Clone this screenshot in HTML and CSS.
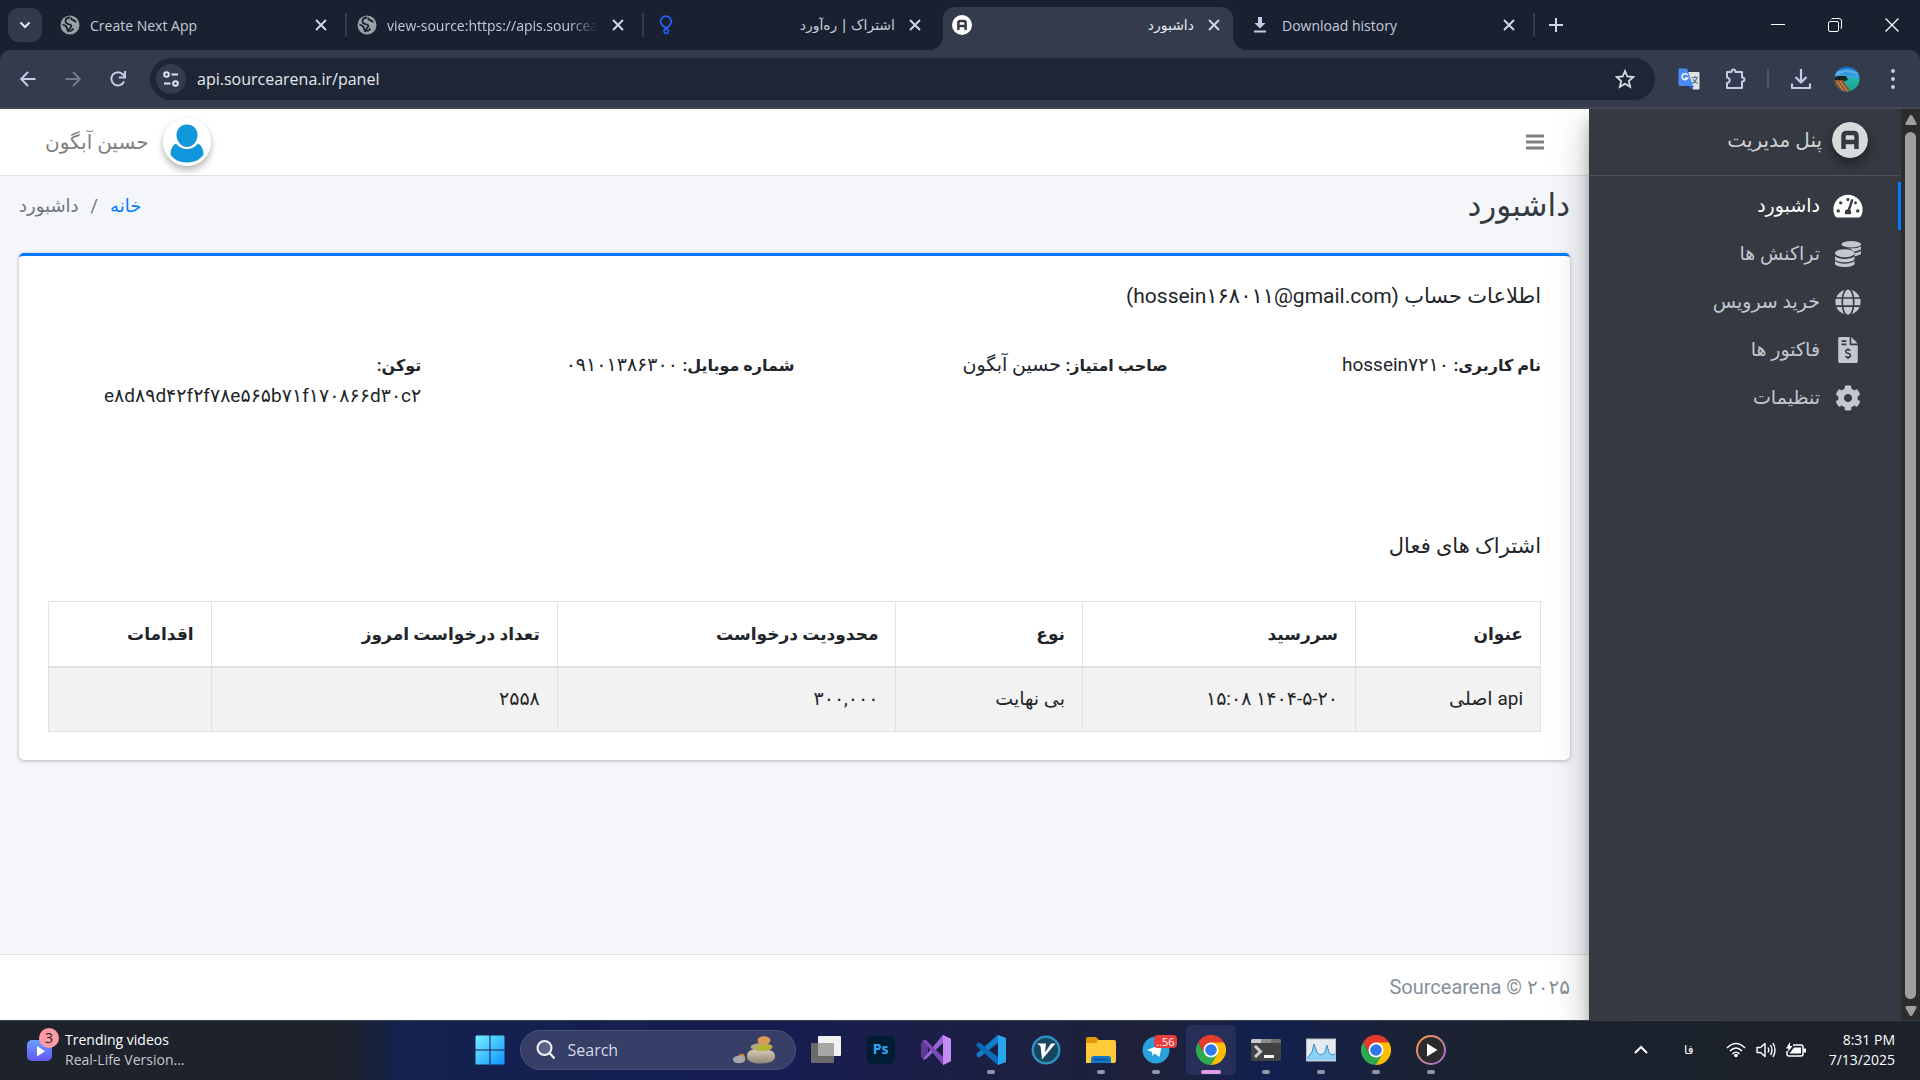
FILE: index.html
```html
<!DOCTYPE html>
<html lang="en">
<head>
<meta charset="utf-8">
<title>داشبورد</title>
<link rel="stylesheet" href="styles.css">
</head>
<body>
<svg class="defs" aria-hidden="true">
  <symbol id="x" viewBox="0 0 12 12"><path d="M1 1l10 10M11 1L1 11" stroke="currentColor" stroke-width="2" fill="none"/></symbol>
  <symbol id="world" viewBox="0 0 20 20"><circle cx="10" cy="10" r="9.500" fill="#9aa0a6"/><path d="M10 2.500c-3 0-4.500 2-4.500 4 0 2.500 2.500 2.500 4.500 3 1.500.5 1.500 1.500 1 2.500-1 1.500-2.500 2-1.500 3.500.8 1 3-.5 4-2M2.500 9.500c2 .5 4 1.500 4.500 3.500.3 1.500.5 2.500 1.500 4M11.500 2.500c-.5 1.500 0 2.500 1.500 2.500 1.500.2 1.500 2 3.500 1.500" stroke="#19202f" stroke-width="1.800" fill="none"/></symbol>
  <symbol id="alogo" viewBox="0 0 36 36"><circle cx="18" cy="18" r="18" fill="currentColor"/><path d="M11.500 27V14q0-3 3-3h7q3 0 3 3v13M11.500 20h13" stroke="#343a40" stroke-width="4.500" fill="none"/></symbol>
  <symbol id="chrome" viewBox="0 0 30 30"><path d="M15 15L2 7.500A15 15 0 0 1 28 7.500z" fill="#e33b2e"/><path d="M15 15l0 15A15 15 0 0 0 28 7.500H15z" fill="#fdbd00"/><path d="M2 7.500l6.500 11.200L15 7.500z" fill="#e33b2e"/><path d="M2 7.500L8.500 18.700 15 22.500l6.500-3.800L15 30A15 15 0 0 1 2 7.500z" fill="#2da94f"/><circle cx="15" cy="15" r="7.500" fill="#fff"/><circle cx="15" cy="15" r="5.800" fill="#2f78ee"/></symbol>
</svg>

<header class="browser">
  <div class="tabstrip">
    <button class="tab-search" aria-label="Search tabs"><svg width="12" height="8" viewBox="0 0 12 8"><path d="M1.500 1.500L6 6l4.500-4.500" stroke="#e3e6ee" stroke-width="2.200" fill="none"/></svg></button>
    <div class="tab">
      <svg class="fav" width="20" height="20"><use href="#world"/></svg><span class="tab-title">Create Next App</span>
      <button class="tab-x" aria-label="Close tab"><svg width="12" height="12"><use href="#x"/></svg></button>
    </div>
    <div class="tab">
      <svg class="fav" width="20" height="20"><use href="#world"/></svg><span class="tab-title fade">view-source:https://apis.sourcearena.ir</span>
      <button class="tab-x" aria-label="Close tab"><svg width="12" height="12"><use href="#x"/></svg></button>
    </div>
    <div class="tab plain">
      <svg class="fav" width="24" height="20" viewBox="0 0 20 20"><path d="M10 13L6.500 10.500A5.300 5.300 0 1 1 13.500 10.500L9 14.500a2.200 2.200 0 1 0 3 .5L8.500 12" stroke="#2563ff" stroke-width="1.700" fill="none"/></svg><span class="tab-title" dir="rtl">اشتراک | ره‌آورد</span>
      <button class="tab-x" aria-label="Close tab"><svg width="12" height="12"><use href="#x"/></svg></button>
    </div>
    <div class="tab active">
      <svg class="fav" width="20" height="20"><use href="#alogo"/></svg><span class="tab-title" dir="rtl">داشبورد</span>
      <button class="tab-x" aria-label="Close tab"><svg width="12" height="12"><use href="#x"/></svg></button>
    </div>
    <div class="tab">
      <svg class="fav" width="24" height="20" viewBox="0 0 20 20"><path d="M8 2h4v6h3.500L10 13.500 4.500 8H8zM4 15.500h12v2H4z" fill="#c3cbe6"/></svg><span class="tab-title">Download history</span>
      <button class="tab-x" aria-label="Close tab"><svg width="12" height="12"><use href="#x"/></svg></button>
    </div>
    <button class="new-tab" aria-label="New tab"><svg width="14" height="14" viewBox="0 0 14 14"><path d="M7 0v14M0 7h14" stroke="#d0d6ea" stroke-width="2"/></svg></button>
    <div class="win">
      <button aria-label="Minimize"><svg width="14" height="14" viewBox="0 0 14 14"><path d="M0 6.500h14" stroke="#fff"/></svg></button>
      <button aria-label="Restore"><svg width="14" height="14" viewBox="0 0 14 14"><rect x=".5" y="3.500" width="10" height="10" rx="1.500" stroke="#fff" fill="none"/><path d="M3 1.500q.5-1 2-1h6q2.500 0 2.500 2.500v6q0 1.500-1 2" stroke="#fff" fill="none"/></svg></button>
      <button aria-label="Close"><svg width="14" height="14" viewBox="0 0 14 14"><path d="M.5.5l13 13M13.500.5l-13 13" stroke="#fff" stroke-width="1.300"/></svg></button>
    </div>
  </div>
  <div class="toolbar">
    <button class="nav-btn" aria-label="Back"><svg width="16" height="16" viewBox="0 0 16 16"><path d="M15.500 8H1.500M8 1L1.200 8 8 15" stroke="#c3cbe6" stroke-width="2" fill="none"/></svg></button>
    <button class="nav-btn" aria-label="Forward"><svg width="16" height="16" viewBox="0 0 16 16"><path d="M.5 8h14M8 1l6.800 7L8 15" stroke="#737a8c" stroke-width="2" fill="none"/></svg></button>
    <button class="nav-btn" aria-label="Reload"><svg width="16" height="16" viewBox="0 0 16 16"><path d="M14 10.500A6.600 6.600 0 1 1 13 3.500l1.500 2" stroke="#c3cbe6" stroke-width="2" fill="none"/><path d="M15 0v6.500H8.800" stroke="#c3cbe6" stroke-width="2" fill="none"/></svg></button>
    <div class="omnibox">
      <button class="site" aria-label="Site information"><svg width="16" height="16" viewBox="0 0 16 16"><g stroke="#e0e4f0" stroke-width="2" fill="none"><circle cx="3.500" cy="3.500" r="2.300"/><path d="M8.500 3.500H15M1 12.500h6.500"/><circle cx="12.500" cy="12.500" r="2.300"/></g></svg></button>
      <input class="url" type="text" value="api.sourcearena.ir/panel" aria-label="Address">
      <button class="star" aria-label="Bookmark"><svg width="20" height="20" viewBox="0 0 20 20"><path d="M10 2l2.300 5.500 6 .5-4.500 4 1.400 5.800L10 14.700l-5.200 3.100L6.200 12 1.700 8l6-.5z" stroke="#d5d9e6" stroke-width="1.800" fill="none"/></svg></button>
    </div>
    <div class="tools">
      <button aria-label="Translate"><svg width="22" height="22" viewBox="0 0 22 22"><path d="M9 4h11.500q1 0 1 1v15.500q0 1-1 1H15z" fill="#dfe1e4"/><path d="M1 .5h8l6 17.500H2q-1.500 0-1.500-1.500V1.500Q.5.500 1.500.5z" fill="#4a8af4"/><path d="M11 18h5l-3 3.500z" fill="#2a56c6"/><path d="M9.500 7A3 3 0 1 0 9.700 10H7" stroke="#fff" stroke-width="1.400" fill="none"/><path d="M13.500 9.500H20M17 8v1.500M19 9.500q-1 4-5 6M15 11q1.500 3 4.500 4.500" stroke="#5b7e96" stroke-width="1.200" fill="none"/></svg></button>
      <button aria-label="Extensions"><svg width="22" height="22" viewBox="0 0 22 22"><path d="M3 4h4.500q0-2.500 2-2.500t2 2.500H18v5.500q2.500 0 2.500 2t-2.500 2V20H3v-5q2.700-.5 2.700-2.800T3 9.500z" stroke="#c3cbe6" stroke-width="2" stroke-linejoin="round" fill="none"/></svg></button>
      <span class="bar"></span>
      <button aria-label="Downloads"><svg width="22" height="22" viewBox="0 0 22 22"><path d="M11 1v13M5.500 9l5.500 5.500L16.500 9M2 15.500V20h18v-4.500" stroke="#c3cbe6" stroke-width="2.200" stroke-linejoin="round" fill="none"/></svg></button>
      <button aria-label="Profile"><svg width="26" height="26" viewBox="0 0 26 26"><defs><clipPath id="av"><circle cx="13" cy="13" r="12.500"/></clipPath><linearGradient id="sky" x2="0" y2="1"><stop offset="0" stop-color="#1161b8"/><stop offset=".4" stop-color="#3aa6e6"/><stop offset=".5" stop-color="#23b6a8"/><stop offset="1" stop-color="#18a08e"/></linearGradient></defs><g clip-path="url(#av)"><path d="M0 0h26v26H0z" fill="url(#sky)"/><path d="M0 6l14-3 12 4v2L12 6 0 10z" fill="#76c6f0" opacity=".6"/><path d="M0 11l4-1h8l2 4-3 1H0z" fill="#16231f"/><path d="M0 14h9l8 12H5L0 20z" fill="#8a5432"/><path d="M3 15l7 11M6 15l8 11" stroke="#d79a63" fill="none"/><path d="M0 17l7 9H0z" fill="#1d4a4c"/></g></svg></button>
      <button aria-label="Menu"><svg width="22" height="22" viewBox="0 0 22 22"><g fill="#c3cbe6"><circle cx="11" cy="3" r="2"/><circle cx="11" cy="11" r="2"/><circle cx="11" cy="19" r="2"/></g></svg></button>
    </div>
  </div>
</header>

<div class="viewport">
  <div class="content" dir="rtl" lang="fa">
    <nav class="topnav">
      <button class="burger" aria-label="منو"><svg width="18" height="16" viewBox="0 0 18 16"><path d="M0 2h18M0 8h18M0 14h18" stroke="#808080" stroke-width="3"/></svg></button>
      <a class="user" href="#"><svg class="user-pic" width="48" height="48" viewBox="0 0 48 48"><circle cx="24" cy="24" r="24" fill="#fff"/><path d="M24 6.500c6 0 10.500 4.500 10.500 10.500S30 29 24 29s-10.500-6-10.500-12S18 6.500 24 6.500z" fill="#1296db"/><path d="M13 25.500c2.500 3.500 6.500 5.500 11 5.500s8.500-2 11-5.500c3.500 2 5.500 6 5.500 11-3 5-9 8-16.500 8s-13.500-3-16.500-8c0-5 2-9 5.500-11z" fill="#1296db"/></svg><span>حسین آبگون</span></a>
    </nav>
    <div class="page-head">
      <h1>داشبورد</h1>
      <ol class="crumbs"><li><a href="#">خانه</a></li><li>داشبورد</li></ol>
    </div>
    <main class="card">
      <h2>اطلاعات حساب (hossein۱۶۸۰۱۱@gmail.com)</h2>
      <div class="facts">
        <p><b>نام کاربری:</b> hossein۷۲۱۰</p>
        <p><b>صاحب امتیاز:</b> حسین آبگون</p>
        <p><b>شماره موبایل:</b> ۰۹۱۰۱۳۸۶۳۰۰</p>
        <p><b>توکن:</b> e۸d۸۹d۴۲f۲f۷۸e۵۶۵b۷۱f۱۷۰۸۶۶d۳۰c۲</p>
      </div>
      <h2>اشتراک های فعال</h2>
      <table>
        <colgroup><col class="c1"><col class="c2"><col class="c3"><col class="c4"><col class="c5"><col class="c6"></colgroup>
        <thead><tr><th>عنوان</th><th>سررسید</th><th>نوع</th><th>محدودیت درخواست</th><th>تعداد درخواست امروز</th><th>اقدامات</th></tr></thead>
        <tbody><tr><td>api اصلی</td><td>۱۴۰۴-۵-۲۰ ۱۵:۰۸</td><td>بی نهایت</td><td>۳۰۰,۰۰۰</td><td>۲۵۵۸</td><td></td></tr></tbody>
      </table>
    </main>
    <footer class="page-foot">Sourcearena © ۲۰۲۵</footer>
  </div>
  <aside class="sidebar" dir="rtl" lang="fa">
    <a class="brand" href="#"><svg class="brand-logo" width="36" height="36"><use href="#alogo"/></svg><span>پنل مدیریت</span></a>
    <ul class="menu">
      <li class="on"><a href="#"><svg width="36" height="26" viewBox="0 0 576 512"><path fill="currentColor" d="M288 32C128.940 32 0 160.940 0 320c0 52.800 14.250 102.260 39.060 144.800 5.610 9.620 16.300 15.200 27.440 15.200h443c11.140 0 21.830-5.580 27.440-15.200C561.750 422.260 576 372.800 576 320c0-159.060-128.940-288-288-288zm0 64c14.710 0 26.580 10.130 30.320 23.650-1.110 2.260-2.640 4.230-3.450 6.670l-9.220 27.670c-5.130 3.490-10.970 6.010-17.640 6.010-17.670 0-32-14.330-32-32S270.330 96 288 96zM96 384c-17.670 0-32-14.330-32-32s14.330-32 32-32 32 14.330 32 32-14.330 32-32 32zm48-160c-17.670 0-32-14.330-32-32s14.330-32 32-32 32 14.330 32 32-14.330 32-32 32zm246.770-72.410l-61.330 184C343.130 347.330 352 364.540 352 384c0 11.720-3.380 22.550-8.880 32H232.880c-5.500-9.450-8.880-20.280-8.880-32 0-33.940 26.500-61.430 59.900-63.590l61.340-184.010c4.170-12.560 17.730-19.450 30.360-15.170 12.570 4.190 19.350 17.790 15.170 30.360zm14.660 57.200l15.520-46.550c3.470-1.290 7.130-2.230 11.050-2.230 17.670 0 32 14.330 32 32s-14.330 32-32 32c-11.380-.01-21.290-6.100-26.570-15.220zM480 384c-17.670 0-32-14.330-32-32s14.330-32 32-32 32 14.330 32 32-14.330 32-32 32z"/></svg><span>داشبورد</span></a></li>
      <li><a href="#"><svg width="36" height="26" viewBox="0 0 512 512"><g fill="currentColor"><ellipse cx="320" cy="64" rx="192" ry="64"/><path d="M512 101c-41 29-117 43-192 43-25 0-49-1-72-4 52 12 104 37 113 66 64-5 120-20 151-44zM512 197c-29 20-76 33-128 40v63c58-8 102-23 128-43z"/><ellipse cx="192" cy="240" rx="192" ry="80"/><path d="M0 300v52c0 35 86 64 192 64s192-29 192-64v-52c-41 34-117 52-192 52S41 334 0 300zM0 396v52c0 35 86 64 192 64s192-29 192-64v-52c-41 34-117 52-192 52S41 430 0 396z"/></g></svg><span>تراکنش ها</span></a></li>
      <li><a href="#"><svg width="36" height="26" viewBox="0 0 496 512"><path fill="currentColor" d="M336.500 160C322 70.700 287.800 8 248 8s-74 62.700-88.500 152h177zM152 256c0 22.200 1.200 43.500 3.300 64h185.300c2.100-20.500 3.300-41.800 3.300-64s-1.200-43.500-3.300-64H155.300c-2.100 20.500-3.300 41.800-3.300 64zm324.700-96c-28.600-67.900-86.500-120.400-158-141.600 24.400 33.800 41.200 84.700 50 141.600h108zM177.200 18.400C105.800 39.600 47.800 92.100 19.300 160h108c8.700-56.900 25.500-107.800 49.900-141.600zM487.400 192H372.700c2.100 21 3.300 42.500 3.300 64s-1.200 43-3.300 64h114.600c5.500-20.500 8.600-41.800 8.600-64s-3.100-43.500-8.500-64zM120 256c0-21.500 1.200-43 3.300-64H8.600C3.200 212.500 0 233.800 0 256s3.200 43.500 8.600 64h114.600c-2-21-3.200-42.500-3.200-64zm39.500 96c14.500 89.300 48.700 152 88.500 152s74-62.700 88.500-152h-177zm159.300 141.600c71.400-21.200 129.400-73.700 158-141.600h-108c-8.800 56.900-25.600 107.800-50 141.600zM19.300 352c28.600 67.900 86.500 120.400 158 141.600-24.400-33.800-41.200-84.700-50-141.600h-108z"/></svg><span>خرید سرویس</span></a></li>
      <li><a href="#"><svg width="36" height="26" viewBox="0 0 384 512"><path fill="currentColor" fill-rule="evenodd" d="M24 0h200v136q0 24 24 24h136v328q0 24-24 24H24q-24 0-24-24V24Q0 0 24 0zM64 64v32h96V64zM64 128v32h96v-32z"/><path fill="currentColor" d="M256 0l128 128H256z"/><path d="M240 268q-16-18-48-18-44 0-44 34 0 28 44 38 48 12 48 42 0 36-48 36-34 0-52-20M192 220v30M192 400v32" stroke="#353941" stroke-width="30" fill="none"/></svg><span>فاکتور ها</span></a></li>
      <li><a href="#"><svg width="36" height="26" viewBox="0 0 512 512"><path fill="currentColor" d="M487.400 315.700l-42.600-24.600c4.300-23.200 4.300-47 0-70.200l42.600-24.600c4.900-2.800 7.100-8.600 5.500-14-11.100-35.600-30-67.800-54.700-94.600-3.800-4.100-10-5.100-14.800-2.300L380.800 110c-17.900-15.400-38.500-27.300-60.800-35.100V25.800c0-5.600-3.900-10.500-9.400-11.700-36.700-8.200-74.300-7.800-109.200 0-5.500 1.200-9.400 6.100-9.400 11.700V75c-22.200 7.900-42.800 19.800-60.800 35.100L88.700 85.500c-4.900-2.800-11-1.900-14.800 2.300-24.700 26.700-43.600 58.900-54.700 94.600-1.700 5.400.6 11.200 5.500 14L67.300 221c-4.300 23.200-4.300 47 0 70.200l-42.600 24.600c-4.900 2.800-7.100 8.600-5.500 14 11.100 35.600 30 67.800 54.700 94.600 3.800 4.100 10 5.100 14.800 2.300l42.600-24.600c17.900 15.400 38.500 27.300 60.800 35.100v49.200c0 5.600 3.900 10.500 9.400 11.700 36.700 8.200 74.300 7.800 109.200 0 5.500-1.200 9.400-6.100 9.400-11.700v-49.200c22.200-7.900 42.800-19.800 60.800-35.100l42.600 24.600c4.900 2.800 11 1.900 14.800-2.300 24.700-26.700 43.600-58.900 54.700-94.600 1.500-5.500-.7-11.300-5.600-14.100zM256 336c-44.100 0-80-35.900-80-80s35.900-80 80-80 80 35.900 80 80-35.900 80-80 80z"/></svg><span>تنظیمات</span></a></li>
    </ul>
  </aside>
  <div class="scroll" aria-hidden="true">
    <svg width="12" height="10" viewBox="0 0 12 10"><path d="M6 0q1 0 1.500 1l4 7q.5 2-1 2h-9q-1.500 0-1-2l4-7Q5 0 6 0z" fill="#9f9f9f"/></svg>
    <span class="thumb"></span>
    <svg width="12" height="10" viewBox="0 0 12 10"><path d="M6 10q1 0 1.500-1l4-7q.5-2-1-2h-9Q0 0 .5 2l4 7Q5 10 6 10z" fill="#9f9f9f"/></svg>
  </div>
</div>

<footer class="taskbar">
  <button class="widget">
    <span class="widget-icon"><svg width="26" height="22" viewBox="0 0 26 22"><defs><linearGradient id="wg" x2="0" y2="1"><stop offset="0" stop-color="#6aa0ff"/><stop offset="1" stop-color="#6457f5"/></linearGradient></defs><rect width="25" height="21" rx="5" fill="url(#wg)"/><path d="M10 6v10.500l8-5.200z" fill="#fff"/></svg><span class="badge">3</span></span>
    <span class="widget-text">Trending videos<small>Real-Life Version...</small></span>
  </button>
  <div class="apps">
    <button class="app" aria-label="Start"><svg width="30" height="30" viewBox="0 0 30 30"><defs><linearGradient id="wn" x2="1" y2="1"><stop offset="0" stop-color="#74efff"/><stop offset="1" stop-color="#1093ff"/></linearGradient></defs><path d="M1.500.5h13v14H.5v-13zM15.500.5h13l1 1v13h-14zM.5 15.500h14v14H.5zM15.500 15.500h14v14h-14z" fill="url(#wn)"/></svg></button>
    <label class="search"><svg width="20" height="20" viewBox="0 0 20 20"><circle cx="8.500" cy="8" r="7" stroke="#f2f2f7" stroke-width="2" fill="#5b6384"/><path d="M13.500 13l5 5.500" stroke="#f2f2f7" stroke-width="2.200"/></svg><input type="text" placeholder="Search" aria-label="Search"><svg width="42" height="28" viewBox="0 0 42 28"><defs><linearGradient id="st" x2="0" y2="1"><stop offset="0" stop-color="#d9cfbd"/><stop offset="1" stop-color="#8f8572"/></linearGradient></defs><path d="M14 20c0-7 8-7 14-7s14 1 14 7-6 7.500-14 7.500S14 26 14 20z" fill="url(#st)"/><ellipse cx="28.500" cy="11" rx="11" ry="4" fill="#b5a982"/><path d="M22 12q6-5 17.500-2.500-.5 5-9 5.500-6 0-8.500-3z" fill="#b3b52a"/><ellipse cx="31" cy="4.500" rx="6.500" ry="4.200" fill="#d99a58"/><path d="M4 21q4-5 7-2.500 2 3 1 7z" fill="#c98b47"/><ellipse cx="6" cy="23.500" rx="6" ry="3.800" fill="#a5a8ad"/></svg></label>
    <button class="app" aria-label="Task view"><svg width="30" height="30" viewBox="0 0 30 30"><rect y="8" width="23" height="20" rx="1" fill="#6b6b6b"/><rect x="7" y="1" width="23" height="20" rx="1" fill="#f1f1f1"/><path d="M7 8h16v13H7z" fill="#a7a7a7"/></svg></button>
    <button class="app" aria-label="Photoshop"><span class="ps">Ps</span></button>
    <button class="app" aria-label="Visual Studio"><svg width="30" height="30" viewBox="0 0 30 30"><path d="M0 8l3-3 4 2.500v15L3 25l-3-3z" fill="#5b3a91"/><path d="M22 0l8 4v22l-8 4V8L5 24l-3.500.5L21 1z" fill="#9b64d6"/><path d="M1.500 5.500L5 5l17 17v8z" fill="#7d4bb8"/><path d="M22 0l8 4v22l-8 4z" fill="#c48cf5"/></svg></button>
    <button class="app run" aria-label="Visual Studio Code"><svg width="30" height="30" viewBox="0 0 30 30"><path d="M22 0v8L4 22l-2 .5L.5 20 .8 18.500 21 .5z" fill="#0f7fc9"/><path d="M22 30v-8L4 8l-2-.5L.5 9.500 1 11.500 21 29.500z" fill="#0a6cb8"/><path d="M22 0l8 3v24l-8 3z" fill="#27a6ee"/></svg></button>
    <button class="app" aria-label="V2Ray"><svg width="30" height="30" viewBox="0 0 30 30"><circle cx="15" cy="15" r="14.500" fill="#2f8fbf"/><circle cx="15" cy="15" r="12" fill="#17475f"/><path d="M6 8.500h9l-1 9 6-9h4.500L11 24.500 9.500 11z" fill="#fff"/></svg></button>
    <button class="app run" aria-label="File Explorer"><svg width="30" height="30" viewBox="0 0 30 30"><path d="M0 4q0-2 2-2h8l3 3v6H0z" fill="#dd9a06"/><path d="M0 8h10l2-3h16q2 0 2 2v19q0 2-2 2H0z" fill="#fdcb3a"/><path d="M5 28v-4q0-3 3-3h14q3 0 3 3v4z" fill="#1277c9"/><path d="M8 24.500h14" stroke="#0b4f93" stroke-width="1.500"/></svg></button>
    <button class="app run" aria-label="Telegram"><svg width="30" height="30" viewBox="0 0 30 30"><circle cx="15" cy="15" r="13.500" fill="#2aa1da"/><path d="M6 15l15-6-2.500 13-5-3.500-2 2.500-.5-4z" fill="#fff"/></svg><span class="count">..56</span></button>
    <button class="app run current" aria-label="Chrome"><svg width="30" height="30"><use href="#chrome"/></svg></button>
    <button class="app run" aria-label="Terminal"><svg width="30" height="30" viewBox="0 0 30 30"><path d="M0 4h30v20q0 2-2 2H2q-2 0-2-2z" fill="#424242"/><path d="M0 8V6q0-2 2-2h8v4z" fill="#c9c9c9"/><path d="M10 4h10v4H10z" fill="#8f8f8f"/><path d="M20 4h8q2 0 2 2v2H20z" fill="#6f6f6f"/><path d="M4 11l5.500 5.500L4 22" stroke="#cfcfcf" stroke-width="3" fill="none"/><path d="M13 20h10v3H13z" fill="#f4f4f4"/></svg></button>
    <button class="app run" aria-label="Resource Monitor"><svg width="30" height="30" viewBox="0 0 30 30"><rect x=".5" y="4" width="29" height="22" fill="#e6ebef" stroke="#b9c0c7"/><path d="M1 23l3-3 2-3 2-8 3 8 3 3 3-1 2-2 2-7 2 8 3 2 3-1v6H1z" fill="#8cd0f5"/><path d="M1 23l3-3 2-3 2-8 3 8 3 3 3-1 2-2 2-7 2 8 3 2 3-1" stroke="#3a8fd0" fill="none"/></svg></button>
    <button class="app run" aria-label="Chrome"><svg width="30" height="30"><use href="#chrome"/></svg></button>
    <button class="app run" aria-label="Media Player"><svg width="30" height="30" viewBox="0 0 30 30"><defs><linearGradient id="mp" x2="1" y2="1"><stop offset="0" stop-color="#ff9a3c"/><stop offset="1" stop-color="#9a6be6"/></linearGradient></defs><circle cx="15" cy="15" r="14" fill="#2b2b2e" stroke="url(#mp)" stroke-width="2"/><path d="M11 8.500v13L21.500 15z" fill="#fff"/></svg></button>
  </div>
  <div class="tray">
    <button aria-label="Hidden icons"><svg width="14" height="10" viewBox="0 0 14 10"><path d="M1 8l6-6 6 6" stroke="#fff" stroke-width="2" fill="none"/></svg></button>
    <button class="lang">فا</button>
    <button class="status" aria-label="Network, sound and battery">
      <svg width="20" height="16" viewBox="0 0 20 16"><g stroke="#fff" stroke-width="1.600" fill="none"><path d="M1 6q9-9 18 0M4 9q6-6 12 0M6.500 12q3.500-3.500 7 0"/></g><circle cx="10" cy="13.500" r="1.800" fill="#fff"/></svg>
      <svg width="20" height="16" viewBox="0 0 20 16"><path d="M1 5.500h3.500L9 1.500v13l-4.500-4H1zM12 5.500q1.500 2.500 0 5M14.500 3q3 5 0 10M17 1q4 7 0 14" stroke="#fff" stroke-width="1.400" stroke-linejoin="round" fill="none"/></svg>
      <svg width="20" height="16" viewBox="0 0 20 16"><path d="M7 3h8q2 0 2 2v7q0 2-2 2H3q-2 0-2-2V9" stroke="#fff" stroke-width="1.500" fill="none"/><path d="M8 5.500h7v6H3.500zM17.500 6.500H20v4h-2.500zM4 0L0 6.500h2.500L2 10l4.500-6H4z" fill="#fff"/></svg>
    </button>
    <button class="clock">8:31 PM<br>7/13/2025</button>
  </div>
</footer>
</body>
</html>
```
FILE: styles.css
```css
* { box-sizing: border-box; }

body {
  margin: 0;
  min-height: 100vh;
  display: grid;
  grid-template-rows: auto 1fr auto;
  font-family: "Open Sans", "DejaVu Sans", sans-serif;
  font-size: 14px;
  background: #f4f6f9;
}

button {
  display: flex;
  align-items: center;
  justify-content: center;
  padding: 0;
  border: 0;
  background: none;
  color: inherit;
  font: inherit;
}

svg { display: block; flex: none; }
.defs { position: absolute; width: 0; height: 0; }

/* Browser frame */
.browser { background: #19202f; }

.tabstrip {
  display: flex;
  align-items: center;
  height: 50px;
  padding-left: 8px;
  color: #c5cbdc;
}

.tab-search {
  width: 34px;
  height: 34px;
  margin-right: 8px;
  border-radius: 11px;
  background: #333a4b;
}

.tab {
  flex: 0 1 297px;
  min-width: 0;
  display: flex;
  align-items: center;
  gap: 10px;
  height: 24px;
  padding: 0 14px 0 10px;
  border-right: 2px solid #333a4b;
}

.tab.plain { border-color: transparent; }

.tab.active {
  flex-basis: 290px;
  height: 43px;
  margin: 7px 5px 0 2px;
  padding: 0 9px 7px;
  border: 0;
  border-radius: 12px 12px 0 0;
  background: #333b4c;
  color: #e6e8ef;
  position: relative;
}

.tab.active::before,
.tab.active::after {
  content: "";
  position: absolute;
  bottom: 0;
  width: 14px;
  height: 14px;
}

.tab.active::before { right: 100%; background: radial-gradient(circle at 0 0, transparent 14px, #333b4c 14px); }
.tab.active::after { left: 100%; background: radial-gradient(circle at 100% 0, transparent 14px, #333b4c 14px); }
.tab.active .fav { color: #fff; }

.tab-title { flex: 1; min-width: 0; overflow: hidden; white-space: nowrap; }
.tab-title[dir="rtl"] { font-family: "DejaVu Sans", sans-serif; }
.fade { -webkit-mask-image: linear-gradient(to right, #000 86%, transparent); mask-image: linear-gradient(to right, #000 86%, transparent); }
.tab-x { width: 20px; height: 20px; color: #d0d5e4; }
.new-tab { width: 42px; height: 42px; }
.win { display: flex; margin-left: auto; }
.win button { width: 57px; height: 50px; }

.toolbar {
  display: flex;
  align-items: center;
  height: 59px;
  padding: 0 4px 0 5px;
  border-bottom: 2px solid #474853;
  border-radius: 10px 10px 0 0;
  background: #333b4c;
}

.nav-btn { width: 45px; height: 42px; }

.omnibox {
  flex: 1;
  display: flex;
  align-items: center;
  height: 42px;
  margin: 0 11px 0 10px;
  padding: 0 20px 0 6px;
  border-radius: 21px;
  background: #1e2636;
}

.site { width: 30px; height: 30px; border-radius: 50%; background: #333b4c; }

.url {
  flex: 1;
  min-width: 0;
  margin-left: 11px;
  padding: 0;
  border: 0;
  font: 16px/24px "Open Sans", sans-serif;
  color: #e4e7ef;
  background: none;
}

.tools { display: flex; align-items: center; }
.tools button { width: 46px; height: 42px; }
.bar { width: 2px; height: 20px; margin: 0 9px; background: #4d5568; }

/* Panel */
.viewport {
  display: flex;
  font-family: Roboto, "DejaVu Sans", sans-serif;
  font-size: 19px;
  line-height: 30px;
  color: #212529;
}

.content { flex: 1; display: flex; flex-direction: column; min-width: 0; }
a { color: #007bff; text-decoration: none; }

.topnav {
  display: flex;
  align-items: center;
  justify-content: space-between;
  height: 67px;
  padding: 0 45px;
  border-bottom: 1px solid #dee2e6;
  background: #fff;
}

.user { display: flex; align-items: center; gap: 14px; font-size: 20px; color: #7f7f7f; }
.user-pic { border-radius: 50%; box-shadow: 0 4px 7px rgba(0, 0, 0, .3); }

.page-head {
  display: flex;
  align-items: center;
  justify-content: space-between;
  height: 77px;
  padding: 0 19px 18px;
}

h1 { margin: 0; font-size: 31px; line-height: 40px; font-weight: 500; color: #343a40; }
h2 { margin: 0; font-size: 21px; line-height: 30px; font-weight: 400; }

.crumbs { display: flex; margin: 0; padding: 0; list-style: none; font-size: 18px; color: #6c757d; }
.crumbs li + li::before { content: "/"; padding: 0 12px; }

.card {
  margin: 0 19px;
  padding: 25px 29px 28px;
  border-top: 3px solid #007bff;
  border-radius: 5px;
  background: #fff;
  box-shadow: 0 0 1px rgba(0, 0, 0, .2), 0 1px 4px rgba(0, 0, 0, .25);
}

.facts { display: grid; grid-template-columns: repeat(4, 1fr); min-height: 150px; margin: 39px 0 31px; }
.facts p { margin: 0; padding-left: 30px; }
b { font-size: 16px; }

table { width: 100%; margin-top: 40px; border-collapse: collapse; table-layout: fixed; border: 1px solid #dee2e6; }
th, td { height: 65px; padding: 0 17px; border: 1px solid #dee2e6; text-align: right; }
th { border-bottom-width: 2px; font-size: 17px; }
td { background: #f2f2f2; }
.c1 { width: 12.4%; }
.c2 { width: 18.3%; }
.c3 { width: 12.5%; }
.c4 { width: 22.7%; }
.c5 { width: 23.2%; }
.c6 { width: 10.9%; }

.page-foot {
  margin-top: auto;
  padding: 17px 19px 18px;
  border-top: 1px solid #dee2e6;
  background: #fff;
  font-size: 20px;
  color: #869099;
}

.sidebar {
  position: relative;
  width: 312px;
  background: #353941;
  color: #c2c7d0;
  box-shadow: 0 17px 35px rgba(0, 0, 0, .25), 0 12px 12px rgba(0, 0, 0, .22);
  clip-path: inset(0 0 0 -60px);
}

.sidebar a { display: flex; align-items: center; gap: 10px; color: inherit; }
.brand { height: 67px; padding: 0 33px 4px; border-bottom: 1px solid #4b5158; font-size: 20px; }
.sidebar .brand { color: #cfd1d4; }
.brand-logo { border-radius: 50%; color: #d8d9db; box-shadow: 0 6px 12px rgba(0, 0, 0, .4); }
.menu { margin: 0; padding: 6px 0; list-style: none; }
.menu a { height: 48px; padding: 0 32px; border-right: 3px solid transparent; }
.menu .on a { border-color: #007bff; color: #fff; }

.scroll {
  display: flex;
  flex-direction: column;
  align-items: center;
  gap: 7px;
  width: 19px;
  padding: 6px 0 4px;
  background: #2c2c2c;
}

.thumb { flex: 1; width: 11px; border-radius: 6px; background: #9f9f9f; }

/* Taskbar */
.taskbar {
  display: grid;
  grid-template-columns: 1fr auto 1fr;
  align-items: center;
  height: 60px;
  padding-bottom: 2px;
  border-top: 1px solid #3a414b;
  background: linear-gradient(to right, #1d222c 0 18%, #13224f 21%, #161d52 40%, #1c1f45 50%, #1e2138 60%, #12204f 66%, #1c2233 74%, #1b222d 82%, #1d212a);
  color: #fff;
  line-height: 20px;
}

.widget { justify-self: start; gap: 12px; padding-left: 27px; text-align: left; }
.widget-icon { position: relative; padding-top: 2px; }
.badge {
  position: absolute;
  top: -10px;
  left: 12px;
  width: 20px;
  height: 20px;
  border-radius: 50%;
  background: #ff99a4;
  color: #222;
  text-align: center;
}
.widget small { display: block; font-size: 14px; color: #c6c8cc; }

.apps { display: flex; align-items: center; gap: 5px; }
.app { position: relative; width: 50px; height: 50px; border-radius: 5px; }
.app.run::after {
  content: "";
  position: absolute;
  bottom: 1px;
  left: calc(50% - 4px);
  width: 8px;
  height: 4px;
  border-radius: 2px;
  background: #9497a8;
}
.app.current { background: #262f58; }
.app.current::after { left: calc(50% - 10px); width: 20px; background: #dd9be2; }

.ps {
  width: 28px;
  height: 28px;
  border-radius: 5px;
  background: #001d34;
  color: #31a8ff;
  font-size: 14px;
  line-height: 25px;
  font-weight: 700;
}

.count {
  position: absolute;
  top: 10px;
  right: 4px;
  padding: 0 2px;
  border-radius: 4px;
  background: #ee3b3b;
  font-size: 11px;
  line-height: 13px;
}

.search {
  display: flex;
  align-items: center;
  width: 276px;
  height: 40px;
  padding: 0 20px 0 15px;
  border: 1px solid #4a5279;
  border-radius: 20px;
  background: #373f68;
}
.search input { flex: 1; min-width: 0; margin-left: 12px; padding: 0; border: 0; background: none; font: 16px/24px "Open Sans", sans-serif; color: #fff; }
.search input::placeholder { color: #d6d8e3; opacity: 1; }

.tray { display: flex; align-items: center; justify-self: end; padding-right: 25px; }
.lang { width: 60px; margin-left: 11px; font: 12px/20px "DejaVu Sans", sans-serif; }
.status { gap: 10px; margin: 0 23px 0 7px; }
.clock { min-width: 64px; text-align: right; justify-content: flex-end; }
```
